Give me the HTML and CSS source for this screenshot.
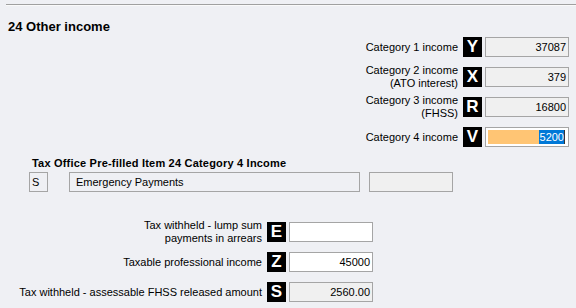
FILE: index.html
```html
<!DOCTYPE html>
<html lang="en">
<head>
    <meta charset="UTF-8">
    <meta name="viewport" content="width=device-width, initial-scale=1.0">
    <title>24 Other income</title>
    <link rel="stylesheet" href="styles.css">
</head>
<body>
    <div class="rule"></div>
    <h2 class="title">24 Other income</h2>

    <!-- Category incomes -->
    <div class="fields fields-top">
        <div class="row">
            <div class="label">Category 1 income</div>
            <div class="badge">Y</div>
            <div class="box readonly">37087</div>
        </div>
        <div class="row">
            <div class="label">Category 2 income<br>(ATO interest)</div>
            <div class="badge">X</div>
            <div class="box readonly">379</div>
        </div>
        <div class="row">
            <div class="label">Category 3 income<br>(FHSS)</div>
            <div class="badge">R</div>
            <div class="box readonly">16800</div>
        </div>
        <div class="row">
            <div class="label">Category 4 income</div>
            <div class="badge">V</div>
            <div class="box focused">
                <div class="edit"><span class="selected">5200</span><span class="caret"></span></div>
            </div>
        </div>
    </div>

    <!-- Pre-filled block -->
    <h3 class="subtitle">Tax Office Pre-filled Item 24 Category 4 Income</h3>
    <div class="prefill">
        <div class="code">S</div>
        <div class="desc">Emergency Payments</div>
        <div class="amount"></div>
    </div>

    <!-- Withholding -->
    <div class="fields fields-bottom">
        <div class="row">
            <div class="label">Tax withheld - lump sum<br>payments in arrears</div>
            <div class="badge">E</div>
            <div class="box"></div>
        </div>
        <div class="row">
            <div class="label">Taxable professional income</div>
            <div class="badge">Z</div>
            <div class="box">45000</div>
        </div>
        <div class="row">
            <div class="label">Tax withheld - assessable FHSS released amount</div>
            <div class="badge">S</div>
            <div class="box readonly">2560.00</div>
        </div>
    </div>
</body>
</html>
```

FILE: styles.css
```css
body {
    margin: 0;
    background-color: #eff0f4;
    font-family: "Liberation Sans", Arial, sans-serif;
    font-size: 11px;
    color: #000;
}
.rule {
    margin: 4px 0 0 6px;
    border-top: 1px solid #a0a0a0;
    border-bottom: 1px solid #fafafa;
}
.title {
    margin: 13px 0 0 8px;
    font-size: 13px;
    line-height: 16px;
    font-weight: bold;
}
.fields {
    display: flex;
    flex-direction: column;
    align-items: flex-end;
    gap: 10px;
}
.fields-top {
    width: 569px;
    margin-top: 2px;
}
.fields-bottom {
    width: 373px;
    margin-top: 30px;
}
.row {
    display: flex;
    align-items: center;
    height: 20px;
}
.label {
    text-align: right;
    line-height: 13px;
    white-space: nowrap;
    margin-right: 5px;
}
.badge {
    width: 19px;
    height: 20px;
    background: #000;
    color: #fff;
    font-weight: bold;
    font-size: 17px;
    line-height: 20px;
    text-align: center;
    margin-right: 3px;
}
.box {
    box-sizing: border-box;
    width: 84px;
    height: 20px;
    border: 1px solid #a5a5a5;
    background: #fff;
    text-align: right;
    line-height: 18px;
    padding-right: 2px;
}
.box.readonly {
    background: #f0f0f0;
}
.box.focused {
    padding: 2px 3px 2px 2px;
}
.edit {
    height: 14px;
    background: #ffc574;
    display: flex;
    justify-content: flex-end;
    align-items: stretch;
}
.selected {
    background: #0078d7;
    color: #fff;
    line-height: 14px;
    padding: 0 0 0 1px;
}
.caret {
    width: 1px;
    background: #333;
}
.subtitle {
    margin: 9px 0 0 32px;
    font-size: 11px;
    line-height: 14px;
    font-weight: bold;
    letter-spacing: 0.2px;
}
.prefill {
    display: flex;
    margin: 2px 0 0 29px;
    height: 20px;
}
.prefill div {
    box-sizing: border-box;
    height: 20px;
    border: 1px solid #a5a5a5;
    line-height: 18px;
}
.code {
    width: 19px;
    padding-left: 2px;
}
.desc {
    width: 291px;
    margin-left: 21px;
    padding-left: 6px;
}
.amount {
    width: 84px;
    margin-left: 9px;
    background: #f0f0f0;
}
```
